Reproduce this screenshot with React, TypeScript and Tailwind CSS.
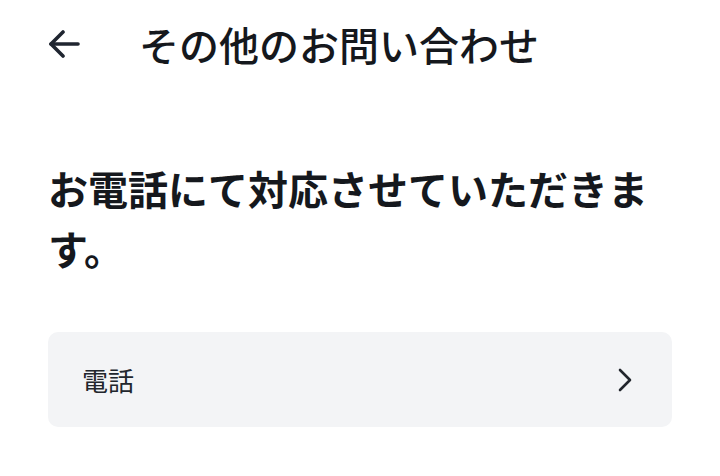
export default function App() {
  return (
    <div className="h-[476px] w-[720px] bg-white px-12 font-['Noto_Sans_CJK_JP',sans-serif] text-[#15181d]">
      {/* Header */}
      <div className="flex h-[88px] items-center">
        <svg width="32" height="28" viewBox="0 0 32 28" fill="none" stroke="#1f2530" strokeWidth="3.6" strokeLinecap="round" strokeLinejoin="round">
          <path d="M30 14H3" />
          <path d="M15 2 3 14l12 12" />
        </svg>
        <h1 className="ml-[59px] text-[40px] leading-none font-medium">その他のお問い合わせ</h1>
      </div>

      {/* Message */}
      <p className="mt-[70px] text-[40px] leading-[60px] font-bold">お電話にて対応させていただきます。</p>

      {/* Phone row */}
      <button className="mt-[54px] flex h-[95px] w-full items-center justify-between rounded-[10px] bg-[#f3f4f6] pr-[40px] pl-[34px]">
        <span className="text-[26px] text-[#22262d]">電話</span>
        <svg width="14" height="24" viewBox="0 0 14 24" fill="none" stroke="#22262d" strokeWidth="2.6" strokeLinecap="round" strokeLinejoin="round">
          <path d="M2 2l10 10-10 10" />
        </svg>
      </button>
    </div>
  );
}
